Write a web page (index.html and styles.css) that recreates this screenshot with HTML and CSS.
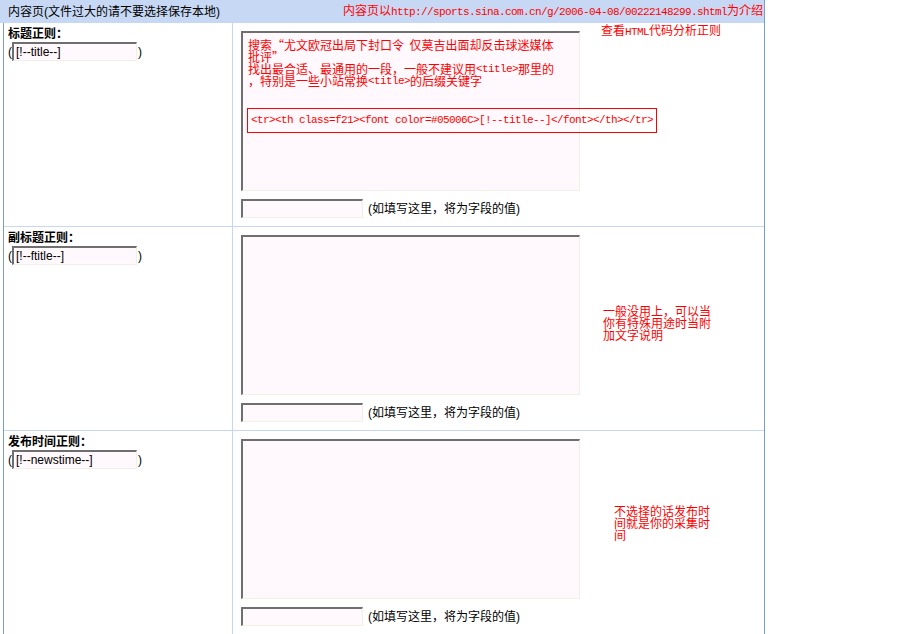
FILE: index.html
```html
<!doctype html>
<html lang="zh-CN">
<head>
    <meta charset="utf-8">
    <title>内容页正则</title>
    <link rel="stylesheet" href="styles.css">
</head>
<body>
<div class="panel">
    <div class="head">
        <span class="head-title">内容页(文件过大的请不要选择保存本地)</span>
        <span class="head-tip">内容页以<span class="mono">http://sports.sina.com.cn/g/2006-04-08/00222148299.shtml</span>为介绍</span>
    </div>
    <div class="rows">
        <div class="row">
            <div class="label-cell">
                <div class="label">标题正则：</div>
                <div class="tag">(<input class="tag-input" type="text" value="[!--title--]">)</div>
            </div>
            <div class="field-cell">
                <div class="field">
                    <div class="area-wrap">
                        <textarea class="area"></textarea>
                        <div class="hint">
                            <div class="hint-line">搜索“尤文欧冠出局下封口令&nbsp;&nbsp;仅莫吉出面却反击球迷媒体</div>
                            <div class="hint-line">批评”</div>
                            <div class="hint-line">找出最合适、最通用的一段，一般不建议用<span class="mono">&lt;title&gt;</span>那里的</div>
                            <div class="hint-line">，特别是一些小站常换<span class="mono">&lt;title&gt;</span>的后缀关键字</div>
                            <div class="hint-code mono">&lt;tr&gt;&lt;th class=f21&gt;&lt;font color=#05006C&gt;[!--title--]&lt;/font&gt;&lt;/th&gt;&lt;/tr&gt;</div>
                        </div>
                    </div>
                    <div class="value-line">
                        <input class="value-input" type="text">
                        <span class="value-text">(如填写这里，将为字段的值)</span>
                    </div>
                </div>
                <div class="note note-title">查看<span class="mono">HTML</span>代码分析正则</div>
            </div>
        </div>
        <div class="row">
            <div class="label-cell">
                <div class="label">副标题正则：</div>
                <div class="tag">(<input class="tag-input" type="text" value="[!--ftitle--]">)</div>
            </div>
            <div class="field-cell">
                <div class="field">
                    <div class="area-wrap">
                        <textarea class="area"></textarea>
                    </div>
                    <div class="value-line">
                        <input class="value-input" type="text">
                        <span class="value-text">(如填写这里，将为字段的值)</span>
                    </div>
                </div>
                <div class="note note-ftitle">一般没用上，可以当你有特殊用途时当附加文字说明</div>
            </div>
        </div>
        <div class="row">
            <div class="label-cell">
                <div class="label">发布时间正则：</div>
                <div class="tag">(<input class="tag-input" type="text" value="[!--newstime--]">)</div>
            </div>
            <div class="field-cell">
                <div class="field">
                    <div class="area-wrap">
                        <textarea class="area"></textarea>
                    </div>
                    <div class="value-line">
                        <input class="value-input" type="text">
                        <span class="value-text">(如填写这里，将为字段的值)</span>
                    </div>
                </div>
                <div class="note note-time">不选择的话发布时间就是你的采集时间</div>
            </div>
        </div>
    </div>
</div>
</body>
</html>
```

FILE: styles.css
```css
body {
    margin: 0;
    background: #fff;
    font-family: "Liberation Sans", "Noto Sans CJK SC", sans-serif;
    font-size: 12px;
    color: #000;
}

.mono {
    font-family: "Liberation Mono", "Noto Sans CJK SC", monospace;
    font-size: 11px;
    letter-spacing: -0.6px;
}

.panel {
    width: 764px;
    border-right: 1px solid #7b9bd5;
    height: 634px;
    overflow: hidden;
}

.head {
    height: 23px;
    background: #c7d8f4;
    display: flex;
    justify-content: space-between;
    align-items: center;
    line-height: 14px;
}

.head-title {
    padding-left: 8px;
}

.head-tip {
    color: #f00;
    padding-right: 1px;
}

.rows {
    margin-left: 3px;
    border-left: 1px solid #7b9bd5;
}

.row {
    display: flex;
    border-bottom: 1px solid #c6d7ee;
}

.label-cell {
    width: 229px;
    border-right: 1px solid #c6d7ee;
    padding: 4px 0 0 4px;
    box-sizing: border-box;
    flex: none;
}

.label {
    font-weight: bold;
    line-height: 14px;
}

.tag {
    display: flex;
    align-items: center;
    line-height: 14px;
    margin-top: 1px;
}

.tag-input {
    width: 125px;
    height: 19px;
    box-sizing: border-box;
    margin: 0 1px 0 0;
    padding: 0 2px;
    border-style: solid;
    border-width: 2px 1px 1px 2px;
    border-color: #6f6f6f #f2f0e6 #f2f0e6 #6f6f6f;
    background: #fff8fc;
    font-family: "Liberation Sans", sans-serif;
    font-size: 12px;
    color: #000;
}

.field-cell {
    flex: 1;
    display: flex;
    align-items: flex-start;
    padding-left: 8px;
}

.field {
    margin: 8px 0;
}

.area-wrap {
    position: relative;
    width: 339px;
    height: 160px;
}

.area {
    display: block;
    width: 339px;
    height: 160px;
    box-sizing: border-box;
    margin: 0;
    border-style: solid;
    border-width: 2px 1px 1px 2px;
    border-color: #6f6f6f #f2f0e6 #f2f0e6 #6f6f6f;
    background: #fff8fc;
    resize: none;
}

.hint {
    position: absolute;
    left: 7px;
    top: 8px;
    width: 420px;
    color: #f00;
    font-family: "Noto Sans CJK SC", sans-serif;
}

.hint-line {
    height: 12px;
    line-height: 12px;
    white-space: nowrap;
}

.hint-line .mono {
    line-height: 12px;
    vertical-align: top;
}

.hint-code {
    display: inline-block;
    margin: 21px 0 0 -1px;
    border: 1px solid #f00;
    padding: 0 3px;
    height: 23px;
    line-height: 23px;
    white-space: nowrap;
}

.value-line {
    display: flex;
    align-items: center;
    margin-top: 8px;
}

.value-input {
    width: 122px;
    height: 19px;
    box-sizing: border-box;
    margin: 0 5px 0 0;
    border-style: solid;
    border-width: 2px 1px 1px 2px;
    border-color: #6f6f6f #f2f0e6 #f2f0e6 #6f6f6f;
    background: #fff8fc;
}

.value-text {
    line-height: 14px;
}

.note {
    color: #f00;
    line-height: 12px;
}

.note-title {
    margin: 2px 0 0 21px;
}

.note-ftitle {
    width: 110px;
    margin: 79px 0 0 23px;
}

.note-time {
    width: 100px;
    margin: 75px 0 0 34px;
}
```
